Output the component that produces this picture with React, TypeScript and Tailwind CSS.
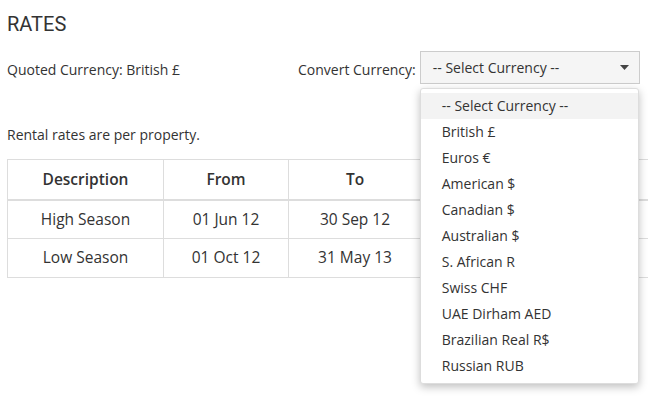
const currencies = [
  '-- Select Currency --',
  'British £',
  'Euros €',
  'American $',
  'Canadian $',
  'Australian $',
  'S. African R',
  'Swiss CHF',
  'UAE Dirham AED',
  'Brazilian Real R$',
  'Russian RUB',
];

const rows = [
  { desc: 'High Season', from: '01 Jun 12', to: '30 Sep 12' },
  { desc: 'Low Season', from: '01 Oct 12', to: '31 May 13' },
];

export default function App() {
  return (
    <div className="w-[648px] h-[406px] overflow-hidden bg-white text-[#333] font-['Open_Sans',sans-serif] relative">
      <div className="pl-[7px] pt-[12px]">
        <h2 className="font-['Roboto',sans-serif] text-[20px] leading-[24px] text-[#333]">RATES</h2>

        <div className="flex items-center mt-[15px] h-[33px] text-[14px]">
          <div className="w-[291px] pt-[4px]">Quoted Currency: British £</div>
          <div className="flex items-center">
            <span className="mr-[4px] pt-[4px]">Convert Currency:</span>
            <div className="relative">
              <div className="w-[220px] h-[33px] border border-[#ccc] bg-[#f5f5f5] flex items-center pl-[12px] pr-[10px] justify-between">
                <span>-- Select Currency --</span>
                <svg width="9" height="5" viewBox="0 0 9 5" className="text-[#444]">
                  <path d="M0 0h9L4.5 5z" fill="currentColor" />
                </svg>
              </div>
              <ul className="absolute left-0 top-[37px] w-[219px] z-10 bg-white border border-[#ddd] rounded-[3px] shadow-[0_3px_8px_rgba(0,0,0,0.25)] pt-[4px] pb-[4px]">
                {currencies.map((c, i) => (
                  <li
                    key={c}
                    className={`h-[26px] leading-[26px] pl-[21px] text-[14px] ${i === 0 ? 'bg-[#f3f3f3]' : ''}`}
                  >
                    {c}
                  </li>
                ))}
              </ul>
            </div>
          </div>
        </div>

        <p className="text-[14px] mt-[41px] leading-[20px]">Rental rates are per property.</p>

        <table className="mt-[14px] w-[760px] border-collapse text-[15.5px] text-center">
          <thead>
            <tr className="h-[40px]">
              <th className="w-[156px] border border-[#ddd] border-b-2 font-semibold">Description</th>
              <th className="w-[125px] border border-[#ddd] border-b-2 font-semibold">From</th>
              <th className="w-[133px] border border-[#ddd] border-b-2 font-semibold">To</th>
              <th className="w-[120px] border border-[#ddd] border-b-2"></th>
              <th className="border border-[#ddd] border-b-2"></th>
            </tr>
          </thead>
          <tbody>
            {rows.map((r) => (
              <tr key={r.desc} className="h-[39px]">
                <td className="border border-[#ddd]">{r.desc}</td>
                <td className="border border-[#ddd]">{r.from}</td>
                <td className="border border-[#ddd]">{r.to}</td>
                <td className="border border-[#ddd]"></td>
                <td className="border border-[#ddd]"></td>
              </tr>
            ))}
          </tbody>
        </table>
      </div>
    </div>
  );
}
